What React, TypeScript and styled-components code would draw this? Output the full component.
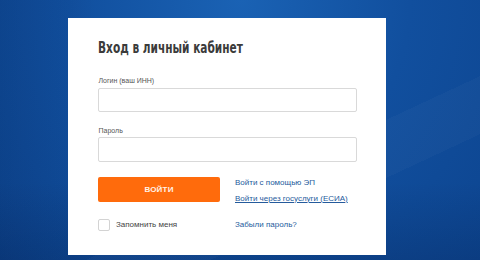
import styled, { createGlobalStyle } from 'styled-components'

const GlobalStyle = createGlobalStyle`
	html, body {
		margin: 0;
		padding: 0;
	}
	body {
		font-family: 'Liberation Sans', Arial, sans-serif;
	}
`

const Page = styled.div`
	width: 480px;
	height: 260px;
	overflow: hidden;
	display: flex;
	align-items: flex-start;
	padding: 18px 0 0 68px;
	box-sizing: border-box;
	background:
		linear-gradient(155deg, transparent 62%, rgba(255, 255, 255, 0.025) 62%, rgba(255, 255, 255, 0.025) 74%, transparent 74%),
		linear-gradient(to bottom, transparent 70%, rgba(0, 20, 60, 0.18) 100%),
		linear-gradient(to right, rgba(0, 20, 60, 0.12) 0%, transparent 20%),
		radial-gradient(ellipse at 50% 0%, #1a62b4 0%, #114f9e 50%, #0d4590 100%);
`

const Card = styled.div`
	width: 318px;
	height: 237px;
	box-sizing: border-box;
	background: #fff;
	padding: 20px 29px 0 30px;
	display: flex;
	flex-direction: column;
`

const Title = styled.h1`
	margin: 0;
	font-family: 'DejaVu Sans', sans-serif;
	font-stretch: condensed;
	font-weight: bold;
	font-size: 16px;
	line-height: 20px;
	color: #3b3b3b;
	white-space: nowrap;
	transform: scaleX(0.735);
	transform-origin: left center;
`

const Field = styled.div<{ $top: number }>`
	display: flex;
	flex-direction: column;
	gap: 1.5px;
	margin-top: ${props => props.$top}px;
`

const Label = styled.label`
	font-size: 7px;
	line-height: 10px;
	color: #555;
	padding-left: 0.5px;
`

const Input = styled.input`
	box-sizing: border-box;
	width: 259px;
	height: 24.5px;
	margin: 0;
	border: 1px solid #d9d9d9;
	border-radius: 2px;
	background: #fff;
	outline: none;
`

const Actions = styled.div`
	display: grid;
	grid-template-columns: 122px 1fr;
	column-gap: 15px;
	row-gap: 14px;
	margin-top: 15px;
`

const Button = styled.button`
	height: 25px;
	margin: 0;
	border: none;
	border-radius: 2px;
	background: #ff6b0c;
	color: #fff2e8;
	font-family: 'Liberation Sans', Arial, sans-serif;
	font-weight: bold;
	font-size: 8px;
	letter-spacing: 0.2px;
	text-transform: uppercase;
`

const Links = styled.div`
	display: flex;
	flex-direction: column;
	gap: 4px;
`

const Link = styled.a<{ $underline?: boolean }>`
	font-size: 8px;
	line-height: 12px;
	color: #255b9c;
	text-decoration: ${props => (props.$underline ? 'underline' : 'none')};
	white-space: nowrap;
`

const Remember = styled.label`
	display: flex;
	align-items: center;
	gap: 6px;
	font-size: 8px;
	color: #444;
`

const Box = styled.span`
	width: 12px;
	height: 12px;
	box-sizing: border-box;
	border: 1px solid #d3d3d3;
	border-radius: 2px;
	background: #fff;
`

const Forgot = styled.div`
	display: flex;
	align-items: center;
`

export default function App() {
	return (
		<>
			<GlobalStyle />
			<Page>
				<Card>
					<Title>Вход в личный кабинет</Title>
					<Field $top={18}>
						<Label>Логин (ваш ИНН)</Label>
						<Input type="text" />
					</Field>
					<Field $top={13.5}>
						<Label>Пароль</Label>
						<Input type="password" />
					</Field>
					<Actions>
						<Button>Войти</Button>
						<Links>
							<Link>Войти с помощью ЭП</Link>
							<Link $underline>Войти через госуслуги (ЕСИА)</Link>
						</Links>
						<Remember>
							<Box />
							Запомнить меня
						</Remember>
						<Forgot>
							<Link>Забыли пароль?</Link>
						</Forgot>
					</Actions>
				</Card>
			</Page>
		</>
	)
}
